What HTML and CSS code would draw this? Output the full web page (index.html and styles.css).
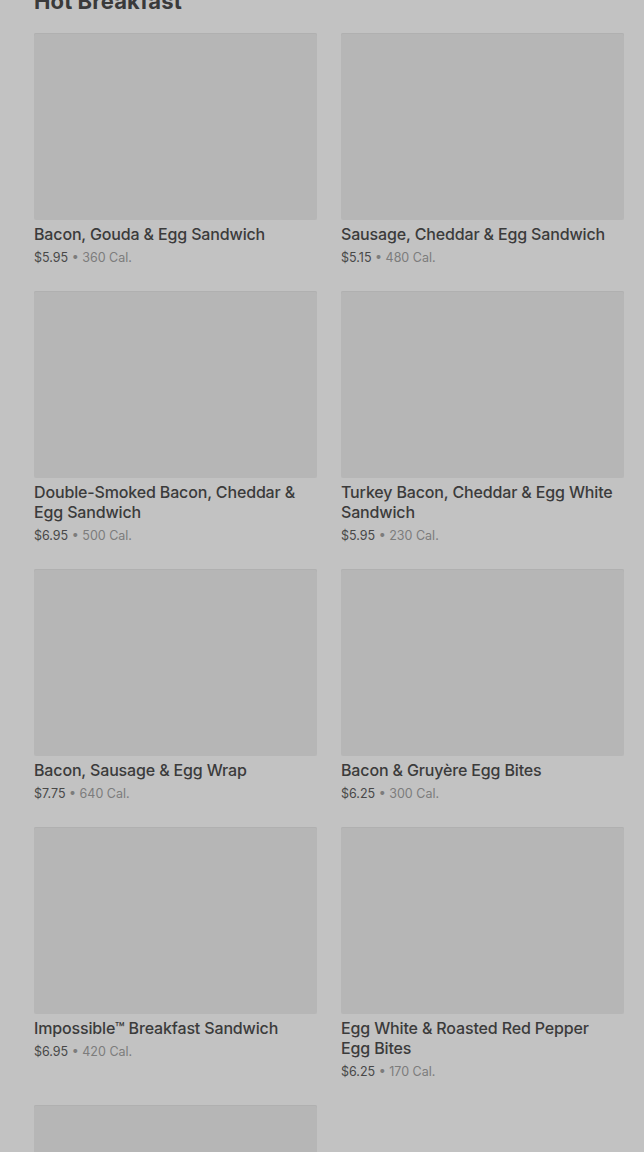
FILE: index.html
```html
<!DOCTYPE html>
<html lang="en">
<head>
<meta charset="UTF-8" />
<meta name="viewport" content="width=device-width, initial-scale=1" />
<title>Hot Breakfast</title>
<link rel="stylesheet" href="styles.css">
</head>
<body>
  <main class="menu">
    <h2 class="section-title">Hot Breakfast</h2>

    <div class="grid">
      <div class="item">
        <div class="thumb"></div>
        <h3>Bacon, Gouda &amp; Egg Sandwich</h3>
        <p class="meta"><span class="price">$5.95</span> • 360 Cal.</p>
      </div>
      <div class="item">
        <div class="thumb"></div>
        <h3>Sausage, Cheddar &amp; Egg Sandwich</h3>
        <p class="meta"><span class="price">$5.15</span> • 480 Cal.</p>
      </div>
      <div class="item">
        <div class="thumb"></div>
        <h3>Double-Smoked Bacon, Cheddar &amp; Egg Sandwich</h3>
        <p class="meta"><span class="price">$6.95</span> • 500 Cal.</p>
      </div>
      <div class="item">
        <div class="thumb"></div>
        <h3>Turkey Bacon, Cheddar &amp; Egg White Sandwich</h3>
        <p class="meta"><span class="price">$5.95</span> • 230 Cal.</p>
      </div>
      <div class="item">
        <div class="thumb"></div>
        <h3>Bacon, Sausage &amp; Egg Wrap</h3>
        <p class="meta"><span class="price">$7.75</span> • 640 Cal.</p>
      </div>
      <div class="item">
        <div class="thumb"></div>
        <h3>Bacon &amp; Gruyère Egg Bites</h3>
        <p class="meta"><span class="price">$6.25</span> • 300 Cal.</p>
      </div>
      <div class="item">
        <div class="thumb"></div>
        <h3>Impossible™ Breakfast Sandwich</h3>
        <p class="meta"><span class="price">$6.95</span> • 420 Cal.</p>
      </div>
      <div class="item">
        <div class="thumb"></div>
        <h3>Egg White &amp; Roasted Red Pepper Egg Bites</h3>
        <p class="meta"><span class="price">$6.25</span> • 170 Cal.</p>
      </div>
      <div class="item">
        <div class="thumb"></div>
      </div>
    </div>
  </main>
</body>
</html>
```

FILE: styles.css
```css
* {
  margin: 0;
  padding: 0;
  box-sizing: border-box;
}

html, body {
  height: 100%;
  overflow: hidden;
  background: #c2c2c2;
  font-family: 'Inter', 'Liberation Sans', sans-serif;
  color: #3b3b3b;
}

.menu {
  padding: 0 20px 0 34px;
}

.section-title {
  font-size: 22px;
  line-height: 28px;
  font-weight: 700;
  margin-top: -13px;
  margin-bottom: 18px;
  color: #3a3a3a;
  letter-spacing: 0.1px;
}

.grid {
  display: grid;
  grid-template-columns: 1fr 1fr;
  column-gap: 24px;
  row-gap: 23px;
}

.thumb {
  height: 187px;
  background: #b6b6b6;
  border-radius: 2px;
  box-shadow: inset 0 1px 0 #b0b0b0;
}

.item h3 {
  margin-top: 4px;
  padding-right: 10px;
  font-size: 16px;
  line-height: 20px;
  font-weight: 500;
  letter-spacing: -0.15px;
  color: #3b3b3b;
}

.meta {
  margin-top: 4px;
  font-size: 12.5px;
  line-height: 20px;
  color: #7c7c7c;
}

.price {
  color: #484848;
}
```
